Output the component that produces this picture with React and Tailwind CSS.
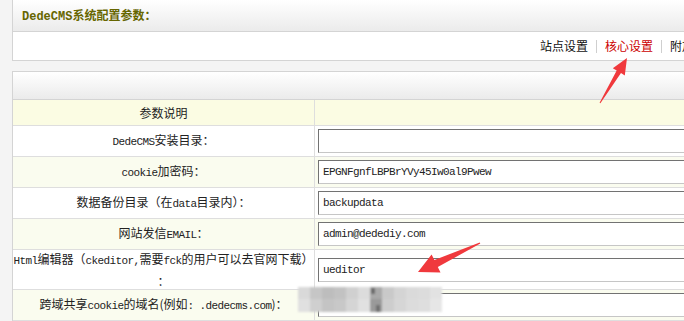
import React from 'react'

const M = ({ children }) => (
  <span className="font-['Liberation_Mono',monospace] text-[11px] tracking-[-0.6px]">{children}</span>
)

const rows = [
  { label: <><M>DedeCMS</M>安装目录：</>, value: '' },
  { label: <><M>cookie</M>加密码：</>, value: 'EPGNFgnfLBPBrYVy45Iw0al9Pwew' },
  { label: <>数据备份目录（在<M>data</M>目录内）：</>, value: 'backupdata' },
  { label: <>网站发信<M>EMAIL</M>：</>, value: 'admin@dedediy.com' },
  {
    label: <><M>Html</M>编辑器（<M>ckeditor,</M>需要<M>fck</M>的用户可以去官网下载）<br />：</>,
    value: 'ueditor',
    tall: true,
  },
  { label: <>跨域共享<M>cookie</M>的域名(例如<M>: .dedecms.com</M>)：</>, value: '' },
]

// mosaic blur over the last row
const mosaic = [
  ['#d9d9d9', '#c6c6c6', '#bdbdbd', '#c2c2c2', '#d0d0d0', '#dcdcdc', '#a9a9a9', '#c9c9c9', '#d4d4d4', '#dadada', '#dcdcdc', '#e2e2e2'],
  ['#e0e0e0', '#cfcfcf', '#c4c4c4', '#c8c8c8', '#d5d5d5', '#e1e1e1', '#9a9a9a', '#cdcdcd', '#d6d6d6', '#dcdcdc', '#dedede', '#e6e6e6'],
]

const App = () => {
  return (
    <div className="relative w-[684px] h-[321px] overflow-hidden bg-[#f4f4f4] text-[12px] text-[#222] font-['Noto_Sans_CJK_SC',sans-serif]">
      <div className="ml-[12px] w-[720px]">

        {/* title box */}
        <div className="border-x border-b border-[#d4d4d4] bg-white">
          <div className="h-[32px] flex items-center pl-[9px] pt-px border-b border-[#d4d4d4] bg-gradient-to-b from-white to-[#ebebeb]">
            <span className="font-bold text-[#666600]">
              <span className="font-['Liberation_Mono',monospace] text-[12px]">DedeCMS</span>系统配置参数：
            </span>
          </div>
          <div className="h-[28px] flex items-center justify-end gap-[8px] pr-[13px] text-[12px]">
            <span className="text-[#111]">站点设置</span>
            <span className="w-px h-[13px] bg-[#cfcfcf]" />
            <span className="text-[#cc0000]">核心设置</span>
            <span className="w-px h-[13px] bg-[#cfcfcf]" />
            <span className="text-[#111]">附加选项</span>
          </div>
        </div>

        {/* config table */}
        <div className="mt-[10px] border border-[#d4d4d4] bg-white">
          <div className="h-[28px] border-b border-[#d4d4d4] bg-gradient-to-b from-white to-[#ebebeb]" />
          <div className="flex h-[26px] border-b border-[#dedede] bg-[#fbfce3]">
            <div className="w-[302px] flex items-center justify-center border-r border-[#dedede]">参数说明</div>
            <div className="flex-1" />
          </div>
          {rows.map((r, i) => (
            <div key={i}
              className={`flex border-b border-[#dedede] ${i % 2 === 1 ? 'bg-[#fafcef]' : 'bg-white'} ${r.tall ? 'h-[40px]' : 'h-[31px]'}`}>
              <div className="w-[302px] flex items-center justify-center text-center leading-[20px] whitespace-nowrap border-r border-[#dedede]">
                <div>{r.label}</div>
              </div>
              <div className="flex-1 flex items-center pl-[3px]">
                <input readOnly value={r.value}
                  className="w-[400px] h-[24px] px-[4px] bg-white border border-[#c6c6c6] border-t-[#727272] border-l-[#727272] outline-none text-[#222] font-['Liberation_Mono',monospace] text-[11px] tracking-[-0.6px]" />
              </div>
            </div>
          ))}
        </div>
      </div>

      {/* annotations */}
      <svg className="absolute inset-0 pointer-events-none" width="684" height="321" viewBox="0 0 684 321">
        <defs>
          <filter id="soft" x="-5%" y="-20%" width="110%" height="140%">
            <feGaussianBlur stdDeviation="1.2" />
          </filter>
        </defs>
        <g filter="url(#soft)">
          {mosaic.map((row, ri) =>
            row.map((c, ci) => (
              <rect key={`${ri}-${ci}`} x={298 + ci * 12} y={287 + ri * 12} width="12" height={ri === 0 ? 12 : 13} fill={c} />
            ))
          )}
          <rect x="371" y="288" width="4" height="6" fill="#6a6a6a" />
          <rect x="376" y="305" width="4" height="7" fill="#707070" />
        </g>
        <polygon points="627,58 624.8,75.4 621,73.1 600.4,103.3 599.6,102.7 616.7,70.5 612.8,68.2" fill="#f0393d" />
        <polygon points="418,272 440.5,272.5 437.8,267 480.3,243.5 479.7,242.5 434.4,260 431.6,254.6" fill="#f0393d" />
      </svg>
    </div>
  )
}

export default App
